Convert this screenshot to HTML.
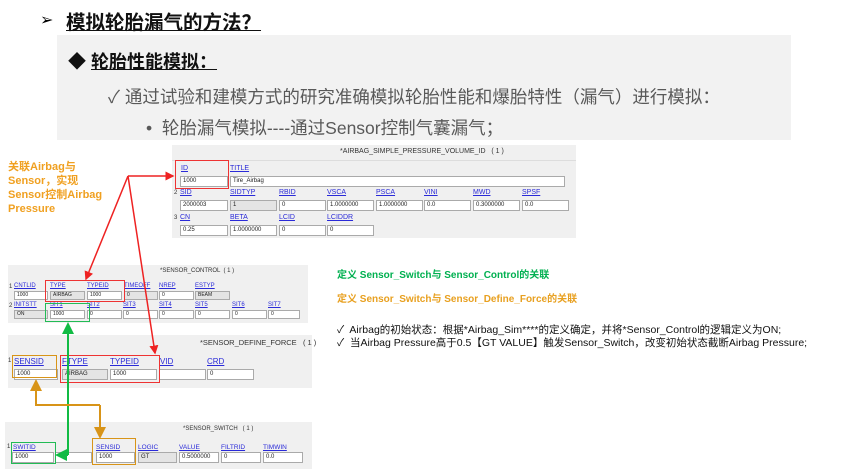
<!DOCTYPE html>
<html><head><meta charset="utf-8"><style>
*{margin:0;padding:0;box-sizing:border-box}
body{width:865px;height:469px;background:#fff;position:relative;overflow:hidden;font-family:"Liberation Sans","Noto Sans CJK SC",sans-serif}
.a{position:absolute;white-space:nowrap}
.p{position:absolute;background:#f0f0f0}
.l{position:absolute;font-size:7px;color:#2a2ad8;text-decoration:underline;white-space:nowrap}
.i{position:absolute;height:11px;background:#fff;border:1px solid #aaa;font-size:6px;line-height:9px;padding-left:2px;color:#222;white-space:nowrap}
.g{background:#e4e4e4}
.h{position:absolute;font-size:7px;color:#333;white-space:nowrap}
.n{position:absolute;font-size:6px;color:#333}
.b{position:absolute;border:1.5px solid}
</style></head><body>
<div class="a" style="left:40px;top:10px;font-size:16px">➢</div>
<div class="a" style="left:66px;top:6px;font-size:19.5px;font-weight:bold;text-decoration:underline;color:#111">模拟轮胎漏气的方法？</div>
<div class="p" style="left:57px;top:35px;width:734px;height:105px;background:#f2f2f2"></div>
<div class="a" style="left:68px;top:48px;font-size:18px;font-weight:bold;color:#111">◆ <span style="text-decoration:underline">轮胎性能模拟：</span></div>
<div class="a" style="left:108px;top:84px;font-size:17.5px;color:#595959">✓&nbsp;<span style="letter-spacing:0">通过试验和建模方式的研究准确模拟轮胎性能和爆胎特性（漏气）进行模拟：</span></div>
<div class="a" style="left:146px;top:115px;font-size:17.5px;color:#595959">•&nbsp;&nbsp;轮胎漏气模拟----通过Sensor控制气囊漏气；</div>

<div class="a" style="left:8px;top:160px;font-size:11px;line-height:14px;font-weight:bold;color:#f0a020">关联Airbag与<br>Sensor，实现<br>Sensor控制Airbag<br>Pressure</div>

<!-- airbag panel -->
<div class="p" style="left:172px;top:145px;width:404px;height:93px"></div>
<div class="h" style="left:340px;top:148px">*AIRBAG_SIMPLE_PRESSURE_VOLUME_ID &nbsp;&nbsp;( 1 )</div>
<div class="p" style="left:172px;top:160px;width:404px;height:1px;background:#ddd"></div>
<div class="l" style="left:181px;top:165px">ID</div><div class="l" style="left:230px;top:165px">TITLE</div>
<div class="i" style="left:180px;top:176px;width:48px">1000</div><div class="i" style="left:230px;top:176px;width:335px">Tire_Airbag</div>
<div class="n" style="left:174px;top:190px">2</div>
<div class="l" style="left:180px;top:189px">SID</div><div class="l" style="left:230px;top:189px">SIDTYP</div><div class="l" style="left:279px;top:189px">RBID</div><div class="l" style="left:327px;top:189px">VSCA</div><div class="l" style="left:376px;top:189px">PSCA</div><div class="l" style="left:424px;top:189px">VINI</div><div class="l" style="left:473px;top:189px">MWD</div><div class="l" style="left:522px;top:189px">SPSF</div>
<div class="i" style="left:180px;top:200px;width:48px">2000003</div><div class="i g" style="left:230px;top:200px;width:47px">1</div><div class="i" style="left:279px;top:200px;width:47px">0</div><div class="i" style="left:327px;top:200px;width:47px">1.0000000</div><div class="i" style="left:376px;top:200px;width:47px">1.0000000</div><div class="i" style="left:424px;top:200px;width:47px">0.0</div><div class="i" style="left:473px;top:200px;width:47px">0.3000000</div><div class="i" style="left:522px;top:200px;width:47px">0.0</div>
<div class="n" style="left:174px;top:215px">3</div>
<div class="l" style="left:180px;top:214px">CN</div><div class="l" style="left:230px;top:214px">BETA</div><div class="l" style="left:279px;top:214px">LCID</div><div class="l" style="left:327px;top:214px">LCIDDR</div>
<div class="i" style="left:180px;top:225px;width:48px">0.25</div><div class="i" style="left:230px;top:225px;width:47px">1.0000000</div><div class="i" style="left:279px;top:225px;width:47px">0</div><div class="i" style="left:327px;top:225px;width:47px">0</div>
<div class="b" style="left:175px;top:160px;width:54px;height:29px;border-color:#e33"></div>

<!-- sensor control -->
<div class="p" style="left:8px;top:265px;width:300px;height:58px"></div>
<div class="h" style="left:160px;top:268px;font-size:6px">*SENSOR_CONTROL &nbsp;( 1 )</div>
<div class="n" style="left:9px;top:284px">1</div>
<div class="l" style="left:14px;top:283px;font-size:6px">CNTLID</div><div class="l" style="left:50px;top:283px;font-size:6px">TYPE</div><div class="l" style="left:87px;top:283px;font-size:6px">TYPEID</div><div class="l" style="left:124px;top:283px;font-size:6px">TIMEOFF</div><div class="l" style="left:159px;top:283px;font-size:6px">NREP</div><div class="l" style="left:195px;top:283px;font-size:6px">ESTYP</div>
<div class="i" style="left:14px;top:291px;width:34px;height:9px;font-size:5px;line-height:7px">1000</div><div class="i g" style="left:50px;top:291px;width:35px;height:9px;font-size:5px;line-height:7px">AIRBAG</div><div class="i" style="left:87px;top:291px;width:35px;height:9px;font-size:5px;line-height:7px">1000</div><div class="i g" style="left:124px;top:291px;width:34px;height:9px;font-size:5px;line-height:7px">0</div><div class="i" style="left:159px;top:291px;width:35px;height:9px;font-size:5px;line-height:7px">0</div><div class="i g" style="left:195px;top:291px;width:35px;height:9px;font-size:5px;line-height:7px">BEAM</div>
<div class="n" style="left:9px;top:303px">2</div>
<div class="l" style="left:14px;top:302px;font-size:6px">INITSTT</div><div class="l" style="left:50px;top:302px;font-size:6px">SIT1</div><div class="l" style="left:87px;top:302px;font-size:6px">SIT2</div><div class="l" style="left:123px;top:302px;font-size:6px">SIT3</div><div class="l" style="left:159px;top:302px;font-size:6px">SIT4</div><div class="l" style="left:195px;top:302px;font-size:6px">SIT5</div><div class="l" style="left:232px;top:302px;font-size:6px">SIT6</div><div class="l" style="left:268px;top:302px;font-size:6px">SIT7</div>
<div class="i g" style="left:14px;top:310px;width:34px;height:9px;font-size:5px;line-height:7px">ON</div><div class="i" style="left:50px;top:310px;width:35px;height:9px;font-size:5px;line-height:7px">1000</div><div class="i" style="left:87px;top:310px;width:35px;height:9px;font-size:5px;line-height:7px">0</div><div class="i" style="left:123px;top:310px;width:35px;height:9px;font-size:5px;line-height:7px">0</div><div class="i" style="left:159px;top:310px;width:35px;height:9px;font-size:5px;line-height:7px">0</div><div class="i" style="left:195px;top:310px;width:35px;height:9px;font-size:5px;line-height:7px">0</div><div class="i" style="left:232px;top:310px;width:35px;height:9px;font-size:5px;line-height:7px">0</div><div class="i" style="left:268px;top:310px;width:32px;height:9px;font-size:5px;line-height:7px">0</div>
<div class="b" style="left:45px;top:280px;width:80px;height:22px;border-color:#e33"></div>
<div class="b" style="left:45px;top:303px;width:45px;height:19px;border-color:#2b5"></div>

<!-- define force -->
<div class="p" style="left:8px;top:335px;width:304px;height:53px"></div>
<div class="h" style="left:200px;top:338px;font-size:7.5px">*SENSOR_DEFINE_FORCE &nbsp;&nbsp;( 1 )</div>
<div class="n" style="left:8px;top:358px">1</div>
<div class="l" style="left:14px;top:357px;font-size:8px">SENSID</div><div class="l" style="left:62px;top:357px;font-size:8px">FTYPE</div><div class="l" style="left:110px;top:357px;font-size:8px">TYPEID</div><div class="l" style="left:160px;top:357px;font-size:8px">VID</div><div class="l" style="left:207px;top:357px;font-size:8px">CRD</div>
<div class="i" style="left:14px;top:369px;width:44px">1000</div><div class="i g" style="left:62px;top:369px;width:46px">AIRBAG</div><div class="i" style="left:110px;top:369px;width:47px">1000</div><div class="i" style="left:159px;top:369px;width:47px"></div><div class="i" style="left:207px;top:369px;width:47px">0</div>
<div class="b" style="left:12px;top:355px;width:45px;height:23px;border-color:#d89418"></div>
<div class="b" style="left:60px;top:355px;width:100px;height:28px;border-color:#e33"></div>

<!-- switch -->
<div class="p" style="left:5px;top:422px;width:307px;height:47px"></div>
<div class="h" style="left:183px;top:426px;font-size:6px">*SENSOR_SWITCH &nbsp;&nbsp;( 1 )</div>
<div class="n" style="left:7px;top:444px">1</div>
<div class="l" style="left:13px;top:444px;font-size:6.5px">SWITID</div><div class="l" style="left:96px;top:444px;font-size:6.5px">SENSID</div><div class="l" style="left:138px;top:444px;font-size:6.5px">LOGIC</div><div class="l" style="left:179px;top:444px;font-size:6.5px">VALUE</div><div class="l" style="left:221px;top:444px;font-size:6.5px">FILTRID</div><div class="l" style="left:263px;top:444px;font-size:6.5px">TIMWIN</div>
<div class="i" style="left:12px;top:452px;width:42px">1000</div><div class="i" style="left:55px;top:452px;width:37px"></div><div class="i" style="left:96px;top:452px;width:39px">1000</div><div class="i g" style="left:138px;top:452px;width:39px">GT</div><div class="i" style="left:179px;top:452px;width:40px">0.5000000</div><div class="i" style="left:221px;top:452px;width:40px">0</div><div class="i" style="left:263px;top:452px;width:40px">0.0</div>
<div class="b" style="left:11px;top:442px;width:45px;height:22px;border-color:#2b5"></div>
<div class="b" style="left:92px;top:438px;width:44px;height:27px;border-color:#d89418"></div>

<svg class="a" style="left:0;top:0" width="865" height="469">
<defs>
<marker id="r" markerWidth="6" markerHeight="6" refX="5" refY="3" orient="auto"><path d="M0,0L6,3L0,6z" fill="#e22"/></marker>
<marker id="gr" markerWidth="6" markerHeight="6" refX="5" refY="3" orient="auto"><path d="M0,0L6,3L0,6z" fill="#1b4"/></marker>
<marker id="o" markerWidth="6" markerHeight="6" refX="5" refY="3" orient="auto"><path d="M0,0L6,3L0,6z" fill="#d89418"/></marker>
</defs>
<g stroke-width="1.5" fill="none">
<path d="M128,176H173" stroke="#e22" marker-end="url(#r)"/>
<path d="M128,176L86,279" stroke="#e22" marker-end="url(#r)"/>
<path d="M128,176L155,353" stroke="#e22" marker-end="url(#r)"/>
<path d="M68,455V324" stroke="#1b4" stroke-width="2" marker-end="url(#gr)"/>
<path d="M68,455H57" stroke="#1b4" stroke-width="2" marker-end="url(#gr)"/>
<path d="M100,405V437" stroke="#d89418" stroke-width="2" marker-end="url(#o)"/>
<path d="M100,405H36V381" stroke="#d89418" stroke-width="2" marker-end="url(#o)"/>
</g></svg>

<div class="a" style="left:337px;top:266px;font-size:10px;font-weight:bold;color:#00b050">定义 Sensor_Switch与 Sensor_Control的关联</div>
<div class="a" style="left:337px;top:290px;font-size:10px;font-weight:bold;color:#e8a020">定义 Sensor_Switch与 Sensor_Define_Force的关联</div>
<div class="a" style="left:337px;top:322px;font-size:10.5px;color:#111">✓&nbsp; Airbag的初始状态：根据*Airbag_Sim****的定义确定，并将*Sensor_Control的逻辑定义为ON;</div>
<div class="a" style="left:337px;top:335px;font-size:10.5px;color:#111">✓&nbsp; 当Airbag Pressure高于0.5【GT  VALUE】触发Sensor_Switch，改变初始状态截断Airbag Pressure;</div>
</body></html>
